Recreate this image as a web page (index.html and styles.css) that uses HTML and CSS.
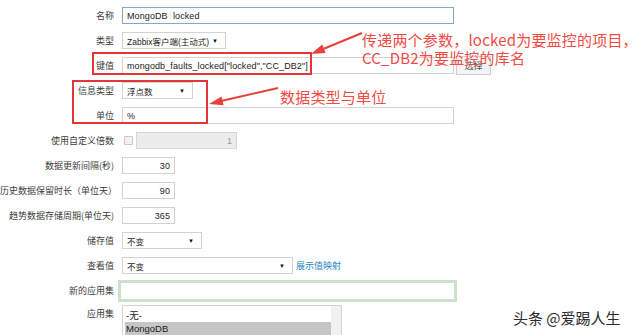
FILE: index.html
```html
<!DOCTYPE html>
<html>
<head>
  <meta charset="utf-8">
  <title>监控项</title>
  <link rel="stylesheet" href="styles.css">
</head>
<body>
  <div class="page">
    <form class="item-form">
      <div class="row">
        <label class="lbl">名称</label>
        <input class="txt txt-wide focused" value="MongoDB  locked">
      </div>
      <div class="row">
        <label class="lbl">类型</label>
        <div class="sel sel-type">Zabbix客户端(主动式)<span class="caret">▼</span></div>
      </div>
      <div class="row">
        <label class="lbl">键值</label>
        <input class="txt txt-wide" value='mongodb_faults_locked["locked","CC_DB2"]'>
        <button type="button" class="btn">选择</button>
      </div>
      <div class="row">
        <label class="lbl">信息类型</label>
        <div class="sel sel-info">浮点数<span class="caret">▼</span></div>
      </div>
      <div class="row">
        <label class="lbl">单位</label>
        <input class="txt txt-wide" value="%">
      </div>
      <div class="row">
        <label class="lbl">使用自定义倍数</label>
        <span class="check"></span>
        <input class="txt txt-mult num" value="1" disabled>
      </div>
      <div class="row">
        <label class="lbl">数据更新间隔(秒)</label>
        <input class="txt txt-num num" value="30">
      </div>
      <div class="row">
        <label class="lbl">历史数据保留时长（单位天）</label>
        <input class="txt txt-num num" value="90">
      </div>
      <div class="row">
        <label class="lbl">趋势数据存储周期(单位天)</label>
        <input class="txt txt-num num" value="365">
      </div>
      <div class="row">
        <label class="lbl">储存值</label>
        <div class="sel sel-store">不变<span class="caret">▼</span></div>
      </div>
      <div class="row">
        <label class="lbl">查看值</label>
        <div class="sel sel-view">不变<span class="caret">▼</span></div>
        <a class="link" href="#">展示值映射</a>
      </div>
      <div class="row">
        <label class="lbl">新的应用集</label>
        <input class="txt txt-app">
      </div>
      <div class="row row-list">
        <label class="lbl">应用集</label>
        <div class="listbox">
          <div class="opt">-无-</div>
          <div class="opt selected">MongoDB</div>
        </div>
      </div>
    </form>

    <div class="mark mark-key"></div>
    <div class="mark mark-type"></div>

    <svg class="arrows" width="640" height="335" viewBox="0 0 640 335">
      <line x1="362" y1="33" x2="322" y2="49.5" stroke="#e8403a" stroke-width="2"/>
      <polygon points="311,54 325.6,52.9 322.2,44.5" fill="#e8403a"/>
      <line x1="278" y1="88" x2="221" y2="101" stroke="#e8403a" stroke-width="2"/>
      <polygon points="209,104 223.6,105.2 221.6,96.4" fill="#e8403a"/>
    </svg>

    <div class="note note-key">传递两个参数，locked为要监控的项目，<br>CC_DB2为要监控的库名</div>
    <div class="note note-type">数据类型与单位</div>

    <div class="watermark">头条 @爱踢人生</div>
  </div>
</body>
</html>
```

FILE: styles.css
```css
body { margin: 0; background: #fff; font-family: "Liberation Sans", "Noto Sans CJK SC", sans-serif; font-size: 9px; color: #3a3a3a; }
.page { position: relative; width: 640px; height: 335px; overflow: hidden; }

.item-form { padding-top: 3px; }
.row { display: flex; align-items: center; height: 25px; }
.lbl { width: 114px; margin-right: 8px; text-align: right; flex-shrink: 0; white-space: nowrap; font-family: "Noto Sans CJK SC", sans-serif; font-size: 9px; color: #3c3c3c; }

.txt { box-sizing: border-box; height: 17px; margin: 0; padding: 0 4px; border: 1px solid #d2d2d2; background: #fff; font-family: "Liberation Sans", "Noto Sans CJK SC", sans-serif; font-size: 9px; letter-spacing: 0.1px; color: #222; outline: none; }
.txt-wide { width: 332px; }
.focused { border-color: #7fa8c9; }
.num { text-align: right; }
.txt-num { width: 53px; }
.txt-mult { width: 101px; background: #ececec; color: #999; border-color: #d6d6d6; }
.txt-app { width: 339px; height: 22px; margin-left: -4px; border: 3px solid #cde0ca; }

.check { box-sizing: border-box; width: 9px; height: 9px; margin: 0 3px 0 2px; border: 1px solid #c8c8c8; border-radius: 1px; background: #f2f2f2; }

.sel { box-sizing: border-box; height: 17px; display: flex; align-items: center; justify-content: space-between; padding: 0 7px 0 4px; border: 1px solid #d2d2d2; background: #fff; color: #222; white-space: nowrap; font-size: 8.5px; font-family: "Liberation Sans", "Noto Sans CJK SC", sans-serif; }
.caret { font-size: 6px; color: #111; }
.sel-type { width: 104px; }
.sel-info { width: 71px; }
.sel-store { width: 80px; }
.sel-view { width: 171px; }

.btn { box-sizing: border-box; width: 35px; height: 19px; margin-left: 2px; padding: 0; border: 1px solid #cfcfcf; background: #f4f4f4; font-family: "Noto Sans CJK SC", sans-serif; font-size: 9px; color: #555; }
.link { margin-left: 3px; color: #1f86c6; text-decoration: none; font-family: "Noto Sans CJK SC", sans-serif; font-size: 9px; }

.row-list { align-items: flex-start; height: auto; }
.row-list .lbl { padding-top: 4px; }
.listbox { box-sizing: border-box; width: 220px; height: 40px; margin-top: 2px; padding: 3px 10px 0 2px; border: 1px solid #d2d2d2; background: linear-gradient(to left, #f1f1f1 10px, #fff 10px); }
.opt { height: 13px; line-height: 13px; padding-left: 1px; font-size: 9.5px; color: #222; }
.selected { background: #c6c6c6; }

.mark { position: absolute; border: 2px solid #e2363a; box-sizing: border-box; }
.mark-key { left: 92px; top: 52px; width: 220px; height: 23px; }
.mark-type { left: 72px; top: 80px; width: 136px; height: 44px; }

.arrows { position: absolute; left: 0; top: 0; pointer-events: none; }

.note { position: absolute; font-family: "Noto Sans CJK SC", sans-serif; font-size: 15px; line-height: 18px; letter-spacing: 0.2px; color: #ef4b45; white-space: nowrap; }
.note-key { left: 362px; top: 31px; }
.note-type { left: 280px; top: 88px; }

.watermark { position: absolute; left: 513px; top: 307px; font-family: "Noto Sans CJK SC", sans-serif; font-size: 15px; color: #2b2b2b; text-shadow: 0 0 2px #fff, 0 0 2px #fff; }
```
